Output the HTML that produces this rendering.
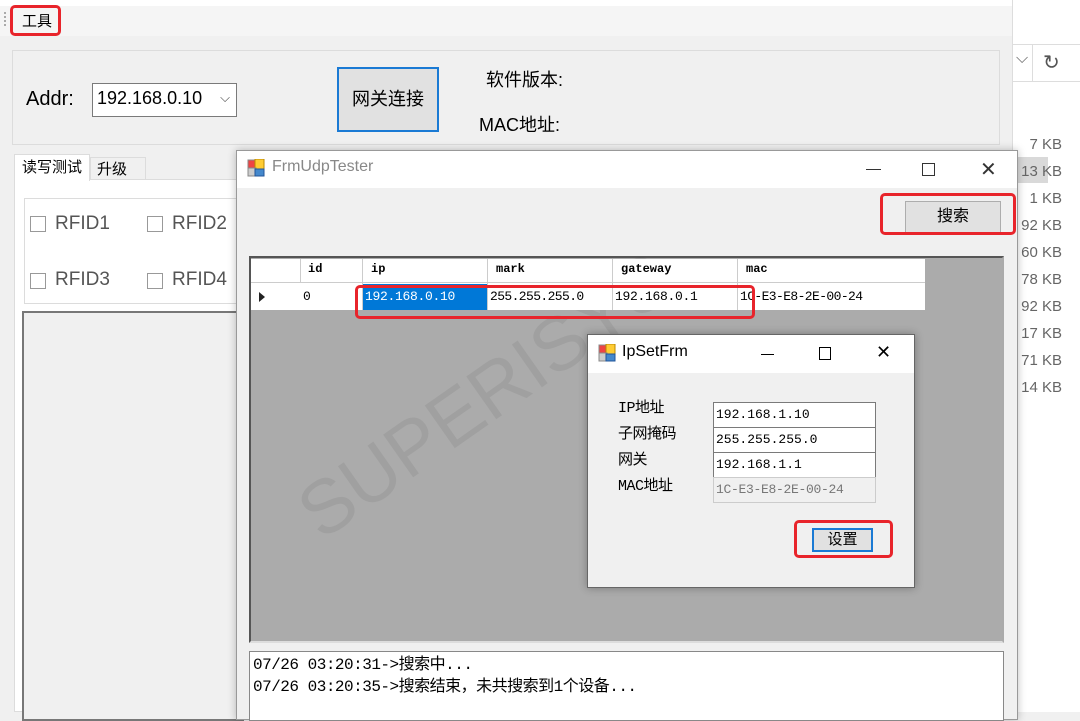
<!DOCTYPE html><html><head><meta charset="utf-8"><style>
*{box-sizing:border-box;margin:0;padding:0}
body{width:1080px;height:712px;overflow:hidden;position:relative;background:#f0f0f0;font-family:"Microsoft YaHei","Liberation Sans","Noto Sans CJK SC",sans-serif;color:#000}
.a{position:absolute}
.mono{font-family:"SimSun","Liberation Mono","Noto Sans CJK SC",monospace}
.red{position:absolute;border:3px solid #e8242b;border-radius:5px}
</style></head><body>
<div class="a" style="left:0;top:0;width:1012px;height:712px;background:#f0f0f0"></div>
<div class="a" style="left:0;top:0;width:1012px;height:36px;background:#f5f5f5;border-top:6px solid #fff"></div>
<div class="a" style="left:4px;top:12px;width:2px;height:14px;border-left:2px dotted #aaa"></div>
<div class="a" style="left:22px;top:10px;font-size:15px">工具</div>
<div class="red" style="left:10px;top:5px;width:51px;height:31px"></div>
<div class="a" style="left:12px;top:50px;width:988px;height:95px;border:1px solid #dcdcdc;background:#f0f0f0"></div>
<div class="a" style="left:26px;top:88px;font-size:20px">Addr:</div>
<div class="a" style="left:92px;top:83px;width:145px;height:34px;border:1px solid #7a7a7a;background:#fff;font-size:18px;padding:4px 4px">192.168.0.10<span style="position:absolute;right:6px;top:6px;font-size:13px;color:#444">&#x2335;</span></div>
<div class="a" style="left:337px;top:67px;width:102px;height:65px;border:2px solid #1a7ad4;background:#e1e1e1;font-size:18px;text-align:center;line-height:61px">网关连接</div>
<div class="a" style="left:486px;top:66px;font-size:18px">软件版本:</div>
<div class="a" style="left:479px;top:111px;font-size:18px">MAC地址:</div>
<div class="a" style="left:14px;top:179px;width:230px;height:533px;background:#fff;border:1px solid #dcdcdc"></div>
<div class="a" style="left:14px;top:154px;width:76px;height:27px;background:#fff;border:1px solid #dcdcdc;border-bottom:none;font-size:15px;padding:1px 7px">读写测试</div>
<div class="a" style="left:90px;top:157px;width:56px;height:23px;background:#f0f0f0;border:1px solid #dcdcdc;font-size:15px;padding:0 6px">升级</div>
<div class="a" style="left:24px;top:198px;width:220px;height:106px;border:1px solid #dcdcdc;background:#fff"></div>
<div class="a" style="left:30px;top:216px;width:16px;height:16px;border:1px solid #999;background:#fff"></div>
<div class="a" style="left:55px;top:213px;font-size:19px;color:#555">RFID1</div>
<div class="a" style="left:147px;top:216px;width:16px;height:16px;border:1px solid #999;background:#fff"></div>
<div class="a" style="left:172px;top:213px;font-size:19px;color:#555">RFID2</div>
<div class="a" style="left:30px;top:273px;width:16px;height:16px;border:1px solid #999;background:#fff"></div>
<div class="a" style="left:55px;top:269px;font-size:19px;color:#555">RFID3</div>
<div class="a" style="left:147px;top:273px;width:16px;height:16px;border:1px solid #999;background:#fff"></div>
<div class="a" style="left:172px;top:269px;font-size:19px;color:#555">RFID4</div>
<div class="a" style="left:22px;top:311px;width:222px;height:410px;border:2px solid #777;background:#f0f0f0"></div>
<div class="a" style="left:1012px;top:0;width:68px;height:712px;background:#fff;border-left:1px solid #ddd"></div>
<div class="a" style="left:1012px;top:44px;width:68px;height:38px;border-top:1px solid #ddd;border-bottom:1px solid #ddd"></div>
<div class="a" style="left:1016px;top:50px;font-size:16px;color:#666">&#x2335;</div>
<div class="a" style="left:1032px;top:44px;width:1px;height:38px;background:#ddd"></div>
<div class="a" style="left:1043px;top:50px;font-size:20px;color:#555">&#x21bb;</div>
<div class="a" style="left:1012px;top:157px;width:36px;height:26px;background:#d9d9d9"></div>
<div class="a" style="left:1012px;top:131px;width:50px;font-size:15px;color:#666;text-align:right;line-height:27px">7 KB<br>13 KB<br>1 KB<br>92 KB<br>60 KB<br>78 KB<br>92 KB<br>17 KB<br>71 KB<br>14 KB</div>
<div class="a" style="left:236px;top:150px;width:782px;height:570px;background:#f0f0f0;border:1px solid #999;box-shadow:0 0 8px rgba(0,0,0,.25)"></div>
<div class="a" style="left:237px;top:151px;width:780px;height:37px;background:#fff"></div>
<svg class="a" style="left:247px;top:159px" width="18" height="18"><rect x="1" y="1" width="9" height="9" fill="#e44" stroke="#888"/><rect x="8" y="0" width="9" height="10" fill="#fc3" stroke="#b80"/><rect x="1" y="9" width="8" height="8" fill="#ccc" stroke="#888"/><rect x="8" y="10" width="9" height="7" fill="#48c" stroke="#259"/></svg>
<div class="a" style="left:272px;top:158px;font-size:16px;color:#888">FrmUdpTester</div>
<div class="a" style="left:866px;top:169px;width:15px;height:1px;background:#333"></div>
<div class="a" style="left:922px;top:163px;width:13px;height:13px;border:1px solid #333"></div>
<div class="a" style="left:980px;top:157px;font-size:20px;color:#333;font-weight:300">✕</div>
<div class="a" style="left:905px;top:201px;width:96px;height:32px;border:1px solid #adadad;background:#e1e1e1;font-size:16px;text-align:center;line-height:30px">搜索</div>
<div class="red" style="left:880px;top:193px;width:136px;height:42px"></div>
<div class="a" style="left:249px;top:256px;width:755px;height:387px;background:#ababab;border:2px solid #555;border-right-color:#aaa;border-bottom-color:#ddd"></div>
<div class="a" style="left:282px;top:485px;font-size:76px;color:rgba(0,0,0,.06);transform:rotate(-35deg);transform-origin:left top;font-family:'Liberation Sans',sans-serif;white-space:nowrap">SUPERISYS</div>
<div class="a mono" style="left:251px;top:259px;width:674px;height:51px;background:#fff;font-size:13px"></div>
<div class="a mono" style="left:251px;top:259px;font-size:12px;height:24px;width:674px;border-bottom:1px solid #ccc">
<span class="a" style="left:49px;width:1px;height:24px;background:#ccc"></span><span class="a" style="left:111px;width:1px;height:51px;background:#ccc"></span><span class="a" style="left:236px;width:1px;height:51px;background:#ccc"></span><span class="a" style="left:361px;width:1px;height:51px;background:#ccc"></span><span class="a" style="left:486px;width:1px;height:51px;background:#ccc"></span>
<span class="a" style="left:57px;top:3px;font-weight:bold">id</span><span class="a" style="left:120px;top:3px;font-weight:bold">ip</span><span class="a" style="left:245px;top:3px;font-weight:bold">mark</span><span class="a" style="left:370px;top:3px;font-weight:bold">gateway</span><span class="a" style="left:495px;top:3px;font-weight:bold">mac</span></div>
<div class="a" style="left:259px;top:292px;width:0;height:0;border-left:6px solid #222;border-top:5px solid transparent;border-bottom:5px solid transparent"></div>
<div class="a" style="left:363px;top:284px;width:124px;height:26px;background:#0078d7"></div>
<div class="a mono" style="left:303px;top:289px;font-size:13px">0</div>
<div class="a mono" style="left:365px;top:289px;font-size:13px;color:#fff;letter-spacing:-0.3px">192.168.0.10</div>
<div class="a mono" style="left:490px;top:289px;font-size:13px;letter-spacing:-0.6px">255.255.255.0</div>
<div class="a mono" style="left:615px;top:289px;font-size:13px;letter-spacing:-0.3px">192.168.0.1</div>
<div class="a mono" style="left:740px;top:289px;font-size:13px;letter-spacing:-0.6px">1C-E3-E8-2E-00-24</div>
<div class="red" style="left:355px;top:285px;width:400px;height:34px"></div>
<div class="a mono" style="left:249px;top:651px;width:755px;height:70px;background:#fff;border:1px solid #888;font-size:16px;line-height:22px;padding:2px 3px;letter-spacing:-0.5px">07/26 03:20:31->搜索中...<br>07/26 03:20:35->搜索结束，未共搜索到1个设备...</div>
<div class="a" style="left:587px;top:334px;width:328px;height:254px;background:#f0f0f0;border:1px solid #666;box-shadow:0 0 8px rgba(0,0,0,.3)"></div>
<div class="a" style="left:588px;top:335px;width:326px;height:38px;background:#fff"></div>
<svg class="a" style="left:598px;top:344px" width="18" height="18"><rect x="1" y="1" width="9" height="9" fill="#e44" stroke="#888"/><rect x="8" y="0" width="9" height="10" fill="#fc3" stroke="#b80"/><rect x="1" y="9" width="8" height="8" fill="#ccc" stroke="#888"/><rect x="8" y="10" width="9" height="7" fill="#48c" stroke="#259"/></svg>
<div class="a" style="left:622px;top:343px;font-size:16px">IpSetFrm</div>
<div class="a" style="left:761px;top:354px;width:13px;height:1px;background:#000"></div>
<div class="a" style="left:819px;top:347px;width:12px;height:13px;border:1px solid #000"></div>
<div class="a" style="left:876px;top:342px;font-size:18px">✕</div>
<div class="a mono" style="left:618px;top:396px;font-size:15px;line-height:26px;letter-spacing:-0.5px">IP地址<br>子网掩码<br>网关<br>MAC地址</div>
<div class="a mono" style="left:713px;top:402px;width:163px;height:26px;background:#fff;border:1px solid #7a7a7a;font-size:13px;padding:4px 2px">192.168.1.10</div>
<div class="a mono" style="left:713px;top:427px;width:163px;height:26px;background:#fff;border:1px solid #7a7a7a;font-size:13px;padding:4px 2px">255.255.255.0</div>
<div class="a mono" style="left:713px;top:452px;width:163px;height:26px;background:#fff;border:1px solid #7a7a7a;font-size:13px;padding:4px 2px">192.168.1.1</div>
<div class="a mono" style="left:713px;top:477px;width:163px;height:26px;background:#f0f0f0;border:1px solid #ccc;font-size:13px;padding:4px 2px;color:#777;letter-spacing:-0.3px">1C-E3-E8-2E-00-24</div>
<div class="a" style="left:812px;top:528px;width:61px;height:24px;border:2px solid #1a7ad4;background:#e1e1e1;font-size:15px;text-align:center;line-height:20px">设置</div>
<div class="red" style="left:794px;top:520px;width:99px;height:38px"></div>
</body></html>
